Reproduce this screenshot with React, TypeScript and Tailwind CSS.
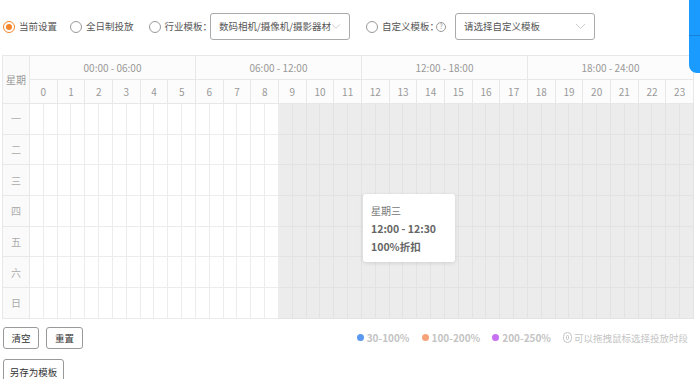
import React from "react";

const hours = Array.from({ length: 24 }, (_, i) => i);
const ranges = ["00:00 - 06:00", "06:00 - 12:00", "12:00 - 18:00", "18:00 - 24:00"];
const days = ["一", "二", "三", "四", "五", "六", "日"];

function Radio({ checked, label }: { checked?: boolean; label: string }) {
  return (
    <label className="flex items-center gap-[4px] whitespace-nowrap text-[9.5px] text-[#555]">
      <span
        className={`flex h-[12px] w-[12px] items-center justify-center rounded-full border ${
          checked ? "border-[#f5852a]" : "border-[#999]"
        } bg-white`}
      >
        {checked && <span className="h-[6px] w-[6px] rounded-full bg-[#f5852a]" />}
      </span>
      {label}
    </label>
  );
}

function Select({ value }: { value: string }) {
  return (
    <div className="flex h-[27px] w-[140px] items-center justify-between rounded-[3px] border border-[#aaa] bg-white pl-[8px] pr-[8px]">
      <span className="whitespace-nowrap text-[9.5px] text-[#555]">{value}</span>
      <svg width="11" height="7" viewBox="0 0 11 7" fill="none">
        <path d="M1 1l4.5 4.5L10 1" stroke="#ccc" strokeWidth="1" />
      </svg>
    </div>
  );
}

export default function App() {
  return (
    <div
      className="relative h-[379px] w-[700px] overflow-hidden bg-white"
      style={{ fontFamily: '"Noto Sans CJK SC", "Noto Sans", sans-serif' }}
    >
      {/* top toolbar */}
      <div className="mt-[13px] flex h-[27px] items-center pl-[3px]">
        <Radio checked label="当前设置" />
        <div className="ml-[13px]">
          <Radio label="全日制投放" />
        </div>
        <div className="ml-[15px] flex items-center">
          <Radio label="行业模板：" />
          <div className="ml-[-2px]">
            <Select value="数码相机/摄像机/摄影器材" />
          </div>
        </div>
        <div className="ml-[16px] flex items-center">
          <Radio label="自定义模板：" />
          <span className="ml-[-3px] flex h-[10px] w-[10px] items-center justify-center rounded-full border border-[#999] text-[7px] leading-none text-[#999]">
            ?
          </span>
          <div className="ml-[9px]">
            <Select value="请选择自定义模板" />
          </div>
        </div>
      </div>

      {/* schedule table */}
      <div className="relative ml-[2px] mt-[15px] w-[692px]">
        <div className="grid grid-cols-[27px_repeat(48,minmax(0,1fr))] grid-rows-[24px_24px_repeat(7,30.7px)] border-l border-t border-[#e8e8e8] text-[10px] text-[#999]">
          <div className="row-span-2 flex items-center justify-center border-b border-r border-[#e8e8e8] bg-[#fafafa]">
            星期
          </div>
          {ranges.map((r) => (
            <div
              key={r}
              className="col-span-12 flex items-center justify-center border-b border-r border-[#e8e8e8] bg-[#fcfcfc]"
            >
              {r}
            </div>
          ))}
          {hours.map((h) => (
            <div
              key={h}
              className="col-span-2 flex items-center justify-center border-b border-r border-[#e8e8e8] bg-[#fcfcfc]"
            >
              {h}
            </div>
          ))}
          {days.map((d) => (
            <React.Fragment key={d}>
              <div className="flex items-center justify-center border-b border-r border-[#e8e8e8] bg-[#fafafa] text-[10px] text-[#aaa]">
                {d}
              </div>
              {Array.from({ length: 48 }, (_, i) => (
                <div
                  key={i}
                  className={
                    i >= 18
                      ? "border-b border-r border-[#e3e3e3] bg-[#ececec]"
                      : "border-b border-r border-[#ececec] bg-white"
                  }
                />
              ))}
            </React.Fragment>
          ))}
        </div>

        {/* tooltip */}
        <div className="absolute left-[361px] top-[139px] h-[68px] w-[92px] rounded-[3px] bg-white px-[8px] pt-[8px] shadow-[0_1px_4px_rgba(0,0,0,0.12)]">
          <div className="text-[10px] leading-[18px] text-[#777]">星期三</div>
          <div className="text-[10.5px] font-bold leading-[18px] text-[#666]">12:00 - 12:30</div>
          <div className="text-[10.5px] font-bold leading-[18px] text-[#666]">100%折扣</div>
        </div>
      </div>

      {/* bottom actions */}
      <div className="mt-[8px] flex items-center pl-[3px]">
        <button className="h-[22px] w-[36px] rounded-[3px] border border-[#999] bg-white text-[9.5px] text-[#333]">
          清空
        </button>
        <button className="ml-[7px] h-[22px] w-[37px] rounded-[3px] border border-[#999] bg-white text-[9.5px] text-[#333]">
          重置
        </button>
        <div className="ml-auto mr-[12px] flex items-center text-[10px] font-semibold text-[#c4c4c4]">
          <span className="mr-[3px] h-[7px] w-[7px] rounded-full bg-[#5b98f0]" />
          <span>30-100%</span>
          <span className="ml-[12px] mr-[3px] h-[7px] w-[7px] rounded-full bg-[#f7a37a]" />
          <span>100-200%</span>
          <span className="ml-[12px] mr-[3px] h-[7px] w-[7px] rounded-full bg-[#c770f2]" />
          <span>200-250%</span>
          <span className="ml-[12px] mr-[2px] flex h-[11px] w-[9px] items-center justify-center rounded-full border border-[#c4c4c4]">
            <span className="h-[5px] w-[3px] rounded-full border border-[#c4c4c4]" />
          </span>
          <span className="text-[9.5px] font-normal">可以拖拽鼠标选择投放时段</span>
        </div>
      </div>
      <div className="mt-[8px] pl-[3px]">
        <button className="h-[25px] w-[61px] rounded-[3px] border border-[#999] bg-white text-[9.5px] text-[#333]">
          另存为模板
        </button>
      </div>

      {/* floating blue panel edge */}
      <div className="absolute right-0 top-0 h-[73px] w-[11px] rounded-bl-[8px] bg-[#1a9bff]">
        <div className="mt-[35px] h-px w-full bg-[#1680d6]" />
      </div>
    </div>
  );
}
